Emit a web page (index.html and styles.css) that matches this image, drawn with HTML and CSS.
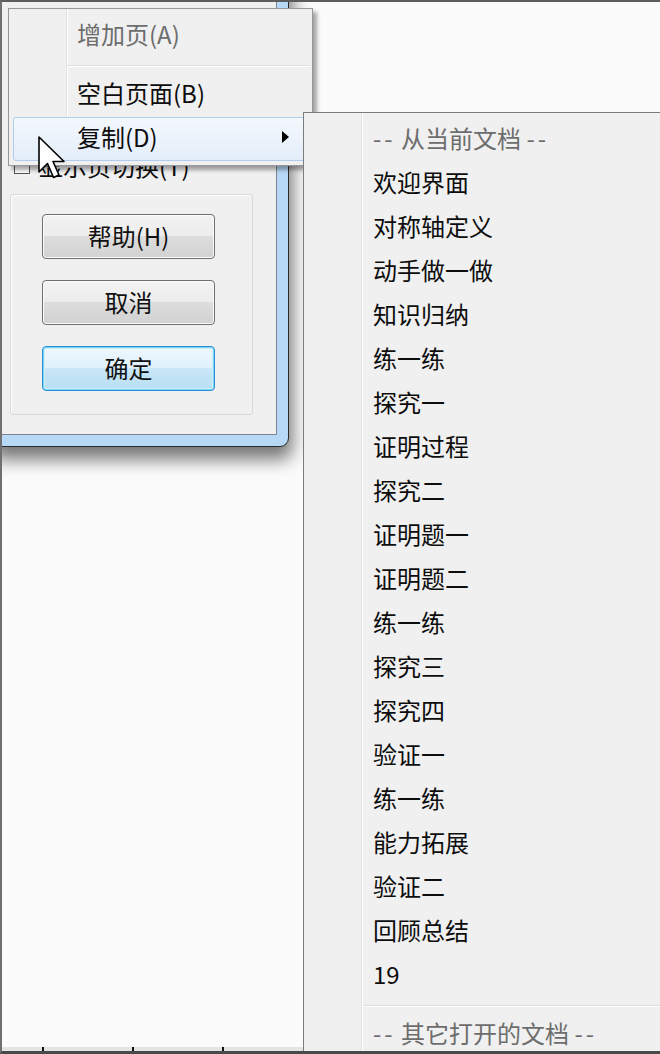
FILE: index.html
```html
<!doctype html>
<html>
	<head>
		<meta charset="utf-8" />
		<title>复制页面菜单</title>
		<link rel="stylesheet" href="styles.css">
	</head>
	<body>
		<div class="screen">
			<div class="dialog">
				<div class="client">
					<div class="check-row"><span class="checkbox"></span>显示页切换(T)</div>
					<div class="group">
						<button class="btn">帮助(H)</button>
						<button class="btn">取消</button>
						<button class="btn btn-default">确定</button>
					</div>
				</div>
			</div>

			<ul class="menu menu-main">
				<li class="item disabled">增加页(A)</li>
				<li class="sep"></li>
				<li class="item">空白页面(B)</li>
				<li class="item active has-sub">复制(D)</li>
			</ul>

			<ul class="menu menu-sub">
				<li class="item header"><span class="dash">--</span> 从当前文档 <span class="dash">--</span></li>
				<li class="item">欢迎界面</li>
				<li class="item">对称轴定义</li>
				<li class="item">动手做一做</li>
				<li class="item">知识归纳</li>
				<li class="item">练一练</li>
				<li class="item">探究一</li>
				<li class="item">证明过程</li>
				<li class="item">探究二</li>
				<li class="item">证明题一</li>
				<li class="item">证明题二</li>
				<li class="item">练一练</li>
				<li class="item">探究三</li>
				<li class="item">探究四</li>
				<li class="item">验证一</li>
				<li class="item">练一练</li>
				<li class="item">能力拓展</li>
				<li class="item">验证二</li>
				<li class="item">回顾总结</li>
				<li class="item">19</li>
				<li class="sep"></li>
				<li class="item header"><span class="dash">--</span> 其它打开的文档 <span class="dash">--</span></li>
			</ul>

			<!-- 鼠标指针 -->
			<svg class="cursor" width="28" height="44" viewBox="0 0 28 44">
				<path d="M1 1 L1 36 L9.5 27.5 L15.5 41.5 L21 39 L15 25.5 L26 25.5 Z" fill="#fff" stroke="#000" stroke-width="1.6" stroke-linejoin="round" />
			</svg>

			<div class="ruler"></div>
		</div>
	</body>
</html>
```

FILE: styles.css
```css
html, body, ul, li { margin: 0; padding: 0; }
li { list-style-type: none; }
body { background: #fcfbfc; font-family: "Noto Sans CJK SC", "Noto Sans", sans-serif; font-size: 24px; color: #0d0d0d; }

.screen { position: relative; width: 660px; height: 1054px; box-sizing: border-box; overflow: hidden; background: #fcfbfc; border-top: 2px solid #5c5c5c; border-left: 2px solid #707070; border-bottom: 3px solid #4a4a4a; }

/* 对话框 */
.dialog { position: absolute; left: -14px; top: -32px; width: 301px; height: 477px; box-sizing: border-box; padding: 0 11px 11px; background: #b7d8f7; border: 1px solid #2b2b2b; border-radius: 0 0 9px 9px; box-shadow: 3px 12px 18px rgba(0, 0, 0, .55); }
.client { height: 100%; box-sizing: border-box; padding-top: 181px; background: #f0f0f0; border: 1px solid #7b8692; border-top: none; }
.check-row { display: flex; align-items: center; height: 28px; line-height: 28px; padding-left: 13px; }
.checkbox { width: 14px; height: 14px; margin-right: 9px; background: #fff; border: 1px solid #555; }
.group { width: 243px; height: 221px; box-sizing: border-box; margin: 14px 0 0 9px; padding: 19px 0 0 31px; border: 1px solid #d8d8d8; border-radius: 3px; box-shadow: inset 1px 1px 0 #fff; }
.btn { display: block; width: 173px; height: 45px; margin-bottom: 21px; padding: 0 0 2px; font: inherit; color: #111; border: 1px solid #707070; border-radius: 4px; background: linear-gradient(#f3f3f3, #ececec 49%, #dddddd 50%, #d2d2d2); box-shadow: inset 0 0 0 1px #fbfbfb; }
.btn-default { border-color: #2692d8; background: linear-gradient(#eef7fd, #e0f1fb 49%, #c9e7f7 50%, #b8def4); box-shadow: inset 0 0 0 1px #7fd0f5, inset 0 0 0 2px #cdeefc; }

/* 菜单 */
.menu { position: absolute; box-sizing: border-box; background: #f0f0f0 linear-gradient(90deg, transparent 57px, #e2e3e3 57px, #e2e3e3 58px, #fff 58px, #fff 59px, transparent 59px); }
.menu-main { left: 6px; top: 6px; width: 305px; height: 158px; padding: 5px 2px 4px 4px; border: 1px solid #979797; box-shadow: 4px 4px 4px rgba(0, 0, 0, .35); }
.menu-sub { left: 301px; top: 110px; right: -10px; bottom: -10px; padding: 5px 2px 0 4px; border: 1px solid #7c7c7c; }

.item { height: 40px; line-height: 40px; padding: 0 0 4px 64px; white-space: nowrap; }
.menu-sub .item { padding-left: 65px; }
.item.disabled, .item.header { color: #6d6d6d; }
.dash { letter-spacing: 3px; }
.item.active { box-sizing: border-box; height: 44px; line-height: 38px; padding: 0 0 4px 63px; border: 1px solid #b1cdee; border-radius: 3px; background: linear-gradient(#f4f8fd, #e3edf9); }
.has-sub { display: flex; }
.has-sub::after { content: ""; margin: 13px 20px 0 auto; width: 0; height: 0; border-style: solid; border-width: 6px 0 6px 7px; border-color: transparent transparent transparent #000; }
.sep { height: 0; margin: 7px 0 6px 54px; border-top: 1px solid #dcdcdc; border-bottom: 1px solid #fff; }
.menu-sub .sep { margin-left: 57px; }

.cursor { position: absolute; left: 36px; top: 134px; }

.ruler { position: absolute; left: 0; bottom: 0; width: 301px; height: 4px; background: repeating-linear-gradient(90deg, transparent 0, transparent 40px, #111 40px, #111 42px, transparent 42px, transparent 90px), #e4e4e4; }
```
